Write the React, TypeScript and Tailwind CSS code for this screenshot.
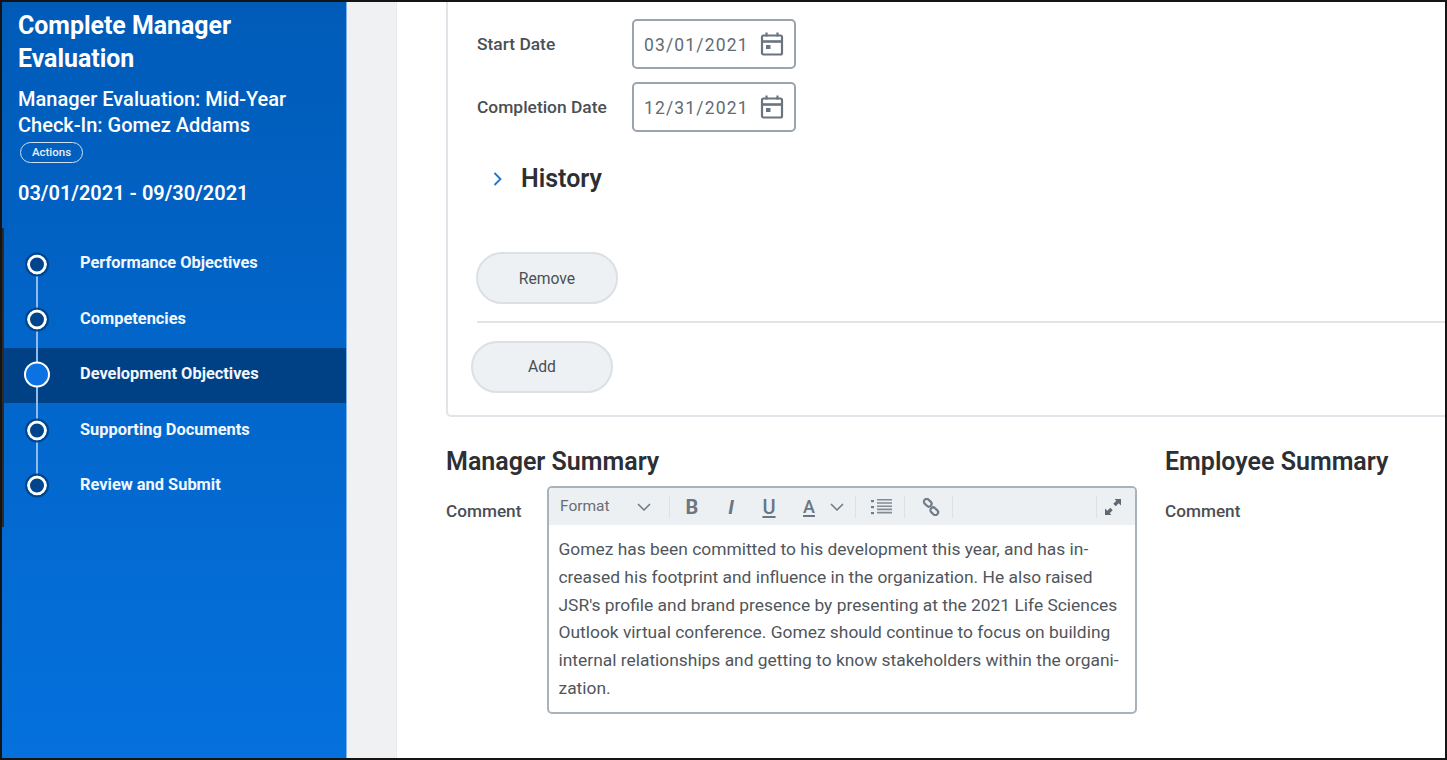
import React from "react";

const font = { fontFamily: "Roboto, 'Liberation Sans', sans-serif" };

function CalendarIcon() {
  return (
    <svg width="24" height="26" viewBox="0 0 24 26" fill="none" stroke="#69747f" strokeWidth="2.2">
      <rect x="2" y="4.5" width="20" height="19" rx="1.5" />
      <path d="M2 10.5h20" strokeWidth="2.6" />
      <path d="M6.5 1.5v4M17.5 1.5v4" />
      <rect x="6" y="14" width="4.5" height="4" fill="#69747f" stroke="none" />
    </svg>
  );
}

function Chevron({ className }: { className: string }) {
  return (
    <svg className={className} width="16" height="10" viewBox="0 0 16 10" fill="none" stroke="#6d7882" strokeWidth="1.5">
      <path d="M2 2l6 6 6-6" />
    </svg>
  );
}

function DateRow({ label, value }: { label: string; value: string }) {
  return (
    <div className="flex items-center h-[50px]">
      <div className="w-[155px] text-[17.4px] font-medium text-[#4a4f54] leading-none translate-y-px">{label}</div>
      <div className="w-[164px] h-[50px] rounded-[5px] border-2 border-[#9aa4ae] flex items-center justify-between pl-[10px] pr-[10px] bg-white">
        <span className="text-[17.5px] tracking-[1.15px] text-[#636b73] translate-y-px">{value}</span>
        <CalendarIcon />
      </div>
    </div>
  );
}

function PillButton({ children, className }: { children: React.ReactNode; className: string }) {
  return (
    <button className={`block w-[142px] h-[52px] rounded-full bg-[#eef1f3] border-2 border-[#dce0e4] text-[15.7px] text-[#4a4f54] ${className}`}>
      {children}
    </button>
  );
}

function Sep({ className = "" }: { className?: string }) {
  return <div className={`w-px h-[22px] bg-[#dde1e5] ${className}`} />;
}

const steps = [
  { label: "Performance Objectives" },
  { label: "Competencies" },
  { label: "Development Objectives", active: true },
  { label: "Supporting Documents" },
  { label: "Review and Submit" },
];

const lines = [
  "Gomez has been committed to his development this year, and has in-",
  "creased his footprint and influence in the organization. He also raised",
  "JSR's profile and brand presence by presenting at the 2021 Life Sciences",
  "Outlook virtual conference. Gomez should continue to focus on building",
  "internal relationships and getting to know stakeholders within the organi-",
  "zation.",
];

export default function App() {
  return (
    <div style={font} className="w-[1447px] h-[760px] overflow-hidden border-2 border-[#141414] flex bg-white relative">
      <aside className="w-[345px] shrink-0 bg-linear-to-b from-[#005bb8] to-[#0571dd] text-white border-r border-r-[#7fb2ea]">
        <div className="pl-[16px] pt-[7px]">
          <h1 className="text-[24.9px] leading-[33px] font-bold w-[260px]">Complete Manager Evaluation</h1>
          <div className="mt-[11px] text-[20px] leading-[26px] font-medium w-[300px]">
            Manager Evaluation: Mid-Year
            <br />
            Check-In: Gomez Addams
          </div>
          <div className="mt-[4px] ml-[2px] w-[63px] h-[21px] rounded-full border border-[#cfe0f5] flex items-center justify-center text-[11.5px] font-medium text-[#e6effa]">
            Actions
          </div>
          <div className="mt-[17px] text-[20px] leading-[26px] font-semibold">03/01/2021 - 09/30/2021</div>
        </div>
        <div className="mt-[31px] relative">
          <div className="absolute left-[34px] top-[28px] w-[2px] h-[222px] bg-[#8fbcec] z-10" />
          {steps.map((s) => (
            <div key={s.label} className={`h-[55.4px] flex items-center relative ${s.active ? "bg-[#004185]" : ""}`}>
              <div className="w-[78px] pr-[8px] flex justify-center shrink-0 relative z-20 -translate-y-[0.5px]">
                {s.active ? (
                  <div className="w-[26px] h-[26px] rounded-full bg-[#0b72e3] border-2 border-white" />
                ) : (
                  <div className="w-[20px] h-[20px] rounded-full bg-[#00458c] border-[3px] border-white outline-2 outline-[#00458c]" />
                )}
              </div>
              <span className="text-[16.4px] font-bold text-[#f2f7fd] -translate-y-px">{s.label}</span>
            </div>
          ))}
        </div>
      </aside>

      <div className="w-[50px] shrink-0 bg-[#f0f1f3] border-r border-r-[#e9eaec]" />

      <main className="flex-1 min-w-0 pl-[49px] overflow-hidden">
        <section className="h-[417px] -mt-[2px] w-[1100px] border-2 border-[#e1e5e9] rounded-b-[5px] pl-[29px] pt-[17px]">
          <DateRow label="Start Date" value="03/01/2021" />
          <div className="mt-[13px]">
            <DateRow label="Completion Date" value="12/31/2021" />
          </div>
          <div className="mt-[27px] h-[40px] flex items-center pl-[14px]">
            <svg width="14" height="16" viewBox="0 0 14 16" fill="none" stroke="#1f74c9" strokeWidth="1.8">
              <path d="M3.5 2l6 6-6 6" />
            </svg>
            <span className="ml-[16px] text-[25px] font-semibold text-[#2c2f33]">History</span>
          </div>
          <PillButton className="mt-[53px] -ml-px pt-[2px]">Remove</PillButton>
          <div className="mt-[17px] h-[2px] bg-[#e1e5e9]" />
          <PillButton className="mt-[18px] -ml-[6px]">Add</PillButton>
        </section>

        <div className="flex mt-[29px]">
          <div className="w-[719px] shrink-0">
            <h2 className="text-[25px] leading-[32px] font-semibold text-[#2c2f33]">Manager Summary</h2>
            <div className="flex mt-[8px]">
              <div className="w-[101px] pt-[15px] text-[17.2px] leading-[20px] font-medium text-[#4a4f54]">Comment</div>
              <div className="w-[590px] h-[228px] rounded-[5px] border-2 border-[#a9b2bb] overflow-hidden">
                <div className="h-[37px] bg-[#edf0f2] flex items-center text-[#6b7680]">
                  <span className="ml-[11px] w-[76px] text-[15.5px] text-[#666e76]">Format</span>
                  <Chevron className="shrink-0" />
                  <Sep className="ml-[17px]" />
                  <span className="ml-[14px] w-[16px] text-center text-[20px] font-bold leading-none">B</span>
                  <span className="ml-[23px] w-[16px] text-center text-[20px] font-bold italic leading-none">I</span>
                  <span className="ml-[22px] w-[16px] text-center text-[20px] font-medium leading-none underline underline-offset-2">U</span>
                  <span className="ml-[24px] w-[16px] text-center text-[18px] font-medium leading-none underline decoration-2 underline-offset-2">A</span>
                  <Chevron className="ml-[12px] shrink-0" />
                  <Sep className="ml-[10px]" />
                  <svg className="ml-[15px]" width="22" height="18" viewBox="0 0 22 18" fill="#737d87">
                    <rect x="0" y="2" width="3" height="2.2" />
                    <rect x="0" y="8" width="3" height="2.2" />
                    <rect x="0" y="14" width="3" height="2.2" />
                    <path d="M6 1h15v1.6H6zM6 4.2h15v1.6H6zM6 7.4h15V9H6zM6 10.6h15v1.6H6zM6 13.8h15v1.6H6z" fill="#818b94" />
                  </svg>
                  <Sep className="ml-[11px]" />
                  <svg className="ml-[17px]" width="18" height="18" viewBox="0 0 18 18" fill="none" stroke="#737d87" strokeWidth="2.2">
                    <rect x="1.5" y="2" width="8.5" height="5.5" rx="2.7" transform="rotate(45 5.75 4.75)" />
                    <rect x="8" y="10.5" width="8.5" height="5.5" rx="2.7" transform="rotate(45 12.25 13.25)" />
                  </svg>
                  <Sep className="ml-[12px]" />
                  <Sep className="ml-[143px]" />
                  <svg className="ml-[7px]" width="18" height="18" viewBox="0 0 18 18" fill="#5f6973">
                    <path d="M10.5 1H17v6.5l-2.3-2.3-3 3-2.4-2.4 3-3z" />
                    <path d="M7.5 17H1v-6.5l2.3 2.3 3-3 2.4 2.4-3 3z" />
                  </svg>
                </div>
                <div className="pl-[9.5px] pt-[11px] text-[17.4px] leading-[27.8px] text-[#50565c] whitespace-nowrap">
                  {lines.map((l) => (
                    <div key={l}>{l}</div>
                  ))}
                </div>
              </div>
            </div>
          </div>
          <div>
            <h2 className="text-[25px] leading-[32px] font-semibold text-[#2c2f33]">Employee Summary</h2>
            <div className="mt-[23px] text-[17.2px] leading-[20px] font-medium text-[#4a4f54]">Comment</div>
          </div>
        </div>
      </main>

      <div className="absolute -left-[2px] top-[226px] w-[4px] h-[299px] bg-[#2b2b2b]" />
    </div>
  );
}
